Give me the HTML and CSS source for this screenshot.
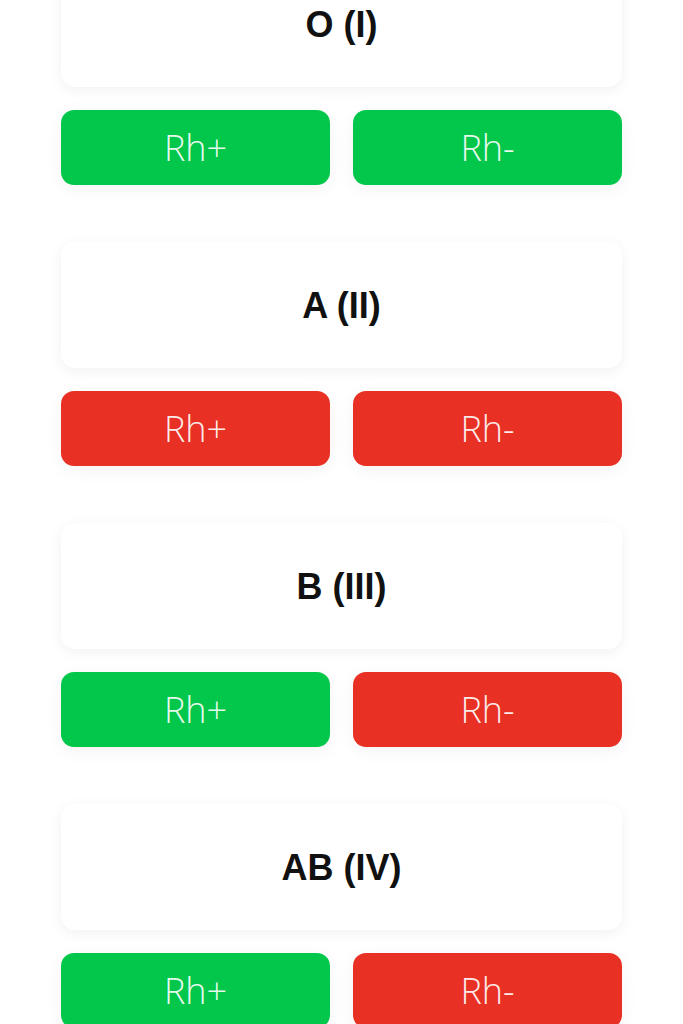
FILE: index.html
```html
<!DOCTYPE html>
<html lang="en">
<head>
    <meta charset="UTF-8">
    <meta name="viewport" content="width=device-width, initial-scale=1.0">
    <title>Blood groups</title>
    <link rel="stylesheet" href="styles.css">
</head>
<body>
    <div class="container">
        <div class="group-list">
            <div class="group">
                <div class="group-card"><h2>O (I)</h2></div>
                <div class="rh-row">
                    <button class="rh ok">Rh+</button>
                    <button class="rh ok">Rh-</button>
                </div>
            </div>
            <div class="group">
                <div class="group-card"><h2>A (II)</h2></div>
                <div class="rh-row">
                    <button class="rh bad">Rh+</button>
                    <button class="rh bad">Rh-</button>
                </div>
            </div>
            <div class="group">
                <div class="group-card"><h2>B (III)</h2></div>
                <div class="rh-row">
                    <button class="rh ok">Rh+</button>
                    <button class="rh bad">Rh-</button>
                </div>
            </div>
            <div class="group">
                <div class="group-card"><h2>AB (IV)</h2></div>
                <div class="rh-row">
                    <button class="rh ok">Rh+</button>
                    <button class="rh bad">Rh-</button>
                </div>
            </div>
        </div>
    </div>
</body>
</html>
```

FILE: styles.css
```css
body {
    margin: 0;
    padding: 0;
    background-color: #ffffff;
    font-family: "Liberation Sans", Arial, sans-serif;
    overflow: hidden;
}
.container {
    padding: 0 61px;
}
.group-list {
    display: flex;
    flex-direction: column;
    gap: 57px;
    margin-top: -39px;
}
.group {
    display: flex;
    flex-direction: column;
    gap: 23px;
}
.group-card {
    height: 126px;
    display: flex;
    align-items: center;
    justify-content: center;
    padding-top: 2px;
    box-sizing: border-box;
    background-color: #fff;
    border-radius: 14px;
    box-shadow: 0 3px 14px rgba(0,0,0,0.06);
}
.group-card h2 {
    margin: 0;
    font-size: 36px;
    font-weight: bold;
    color: #111;
}
.rh-row {
    display: grid;
    grid-template-columns: 1fr 1fr;
    gap: 23px;
}
.rh {
    height: 75px;
    border: none;
    border-radius: 13px;
    font-family: "Open Sans", sans-serif;
    font-weight: 350;
    font-size: 36px;
    color: rgba(255,255,255,0.92);
    cursor: pointer;
    box-shadow: 0 4px 18px rgba(0,0,0,0.05);
}
.rh.ok {
    background-color: #03c74a;
}
.rh.bad {
    background-color: #e93024;
}
```
